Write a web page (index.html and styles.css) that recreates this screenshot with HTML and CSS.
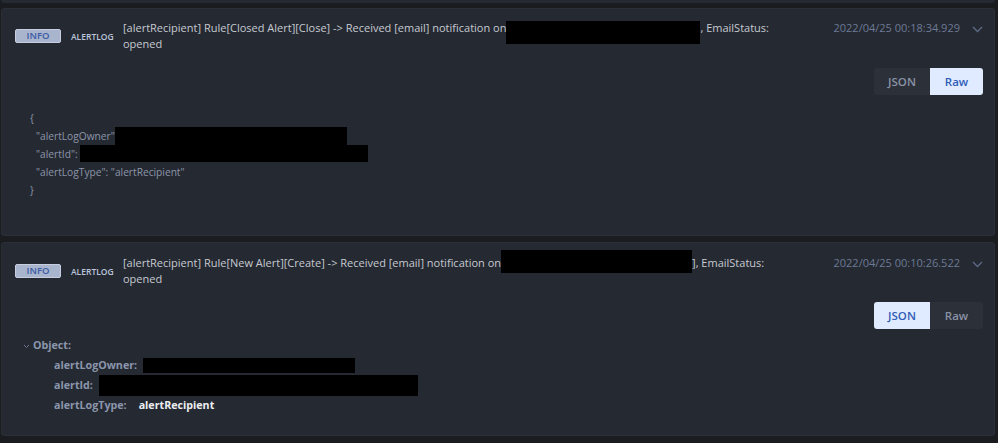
FILE: index.html
```
<!DOCTYPE html>
<html>
<head>
    <title>Alert log</title>
    <meta charset="utf-8" />
    <link rel="stylesheet" href="styles.css">
</head>
<body>
    <div class="log">
        <div class="card-tail"></div>

        <!-- entry shown as raw text -->
        <div class="card">
            <div class="head">
                <span class="badge">INFO</span>
                <span class="source">ALERTLOG</span>
                <div class="message">[alertRecipient] Rule[Closed Alert][Close] -&gt; Received [email] notification on<span class="redact r1"></span>, EmailStatus: opened</div>
                <span class="time">2022/04/25 00:18:34.929</span>
                <span class="chevron"><svg width="11" height="7" viewBox="0 0 11 7"><path d="M1 1l4.5 4.5L10 1" fill="none" stroke="currentColor" stroke-width="1.3"/></svg></span>
            </div>
            <div class="tabs">
                <button class="tab">JSON</button><button class="tab on">Raw</button>
            </div>
            <div class="raw">
                <div>{</div>
                <div class="in">"alertLogOwner"<span class="redact r2"></span></div>
                <div class="in">"alertId": <span class="redact r3"></span></div>
                <div class="in">"alertLogType": "alertRecipient"</div>
                <div>}</div>
            </div>
        </div>

        <!-- entry shown as json tree -->
        <div class="card second">
            <div class="head">
                <span class="badge">INFO</span>
                <span class="source">ALERTLOG</span>
                <div class="message">[alertRecipient] Rule[New Alert][Create] -&gt; Received [email] notification on<span class="redact r4"></span>], EmailStatus: opened</div>
                <span class="time">2022/04/25 00:10:26.522</span>
                <span class="chevron"><svg width="11" height="7" viewBox="0 0 11 7"><path d="M1 1l4.5 4.5L10 1" fill="none" stroke="currentColor" stroke-width="1.3"/></svg></span>
            </div>
            <div class="tabs">
                <button class="tab on">JSON</button><button class="tab">Raw</button>
            </div>
            <div class="tree">
                <div class="node"><svg class="caret" width="7" height="5" viewBox="0 0 7 5"><path d="M1 1l2.5 2.5L6 1" fill="none" stroke="currentColor" stroke-width="1"/></svg>Object:</div>
                <div class="row"><span class="key">alertLogOwner:</span><span class="redact r5"></span></div>
                <div class="row"><span class="key">alertId:</span><span class="redact r6"></span></div>
                <div class="row"><span class="key">alertLogType:</span><span class="val">alertRecipient</span></div>
            </div>
        </div>
    </div>
</body>
</html>
```
FILE: styles.css
```
body {
    margin: 0;
    background-color: #1a1c20;
    font-family: "Open Sans", "Noto Sans", sans-serif;
    color: #c6cad2;
}
.log {
    padding: 0 3px 0 1px;
}
.card-tail {
    height: 3px;
    background-color: #252931;
    border-radius: 0 0 3px 3px;
    margin-bottom: 5px;
}
.card {
    background-color: #252931;
    border: 1px solid #2b3038;
    border-radius: 3px;
    margin-bottom: 6px;
    padding: 11px 11px 36px 0;
}
.card.second {
    padding-top: 12px;
    padding-bottom: 20px;
}
.head {
    display: flex;
    align-items: center;
}
.badge {
    width: 44px;
    height: 12px;
    margin-left: 13px;
    background-color: #a9b4cd;
    border: 1px solid #c6cee0;
    border-radius: 2px;
    color: #3a5ca6;
    font-size: 9.5px;
    font-weight: 600;
    line-height: 12px;
    text-align: center;
}
.source {
    margin-left: 10px;
    width: 44px;
    color: #bcc6dc;
    font-size: 8.5px;
    font-weight: 600;
}
.message {
    flex: 1;
    margin-left: 8px;
    padding-right: 42px;
    font-size: 11px;
    line-height: 16px;
}
.time {
    align-self: flex-start;
    color: #6d7a96;
    font-size: 11px;
    line-height: 16px;
}
.chevron {
    align-self: flex-start;
    margin: -1px 0 0 12px;
    color: #5d6b86;
    line-height: 16px;
}
.redact {
    display: inline-block;
    background-color: #000;
    vertical-align: top;
}
.r1 {
    width: 194px;
    height: 23px;
    margin: 1px 0 -8px;
}
.r4 {
    width: 191px;
    height: 23px;
    margin: -5px 0 -2px;
}
.tabs {
    display: flex;
    justify-content: flex-end;
    margin-top: 16px;
}
.second .tabs {
    margin-top: 15px;
}
.tab {
    width: 56px;
    height: 27px;
    border: none;
    background-color: #2c3039;
    color: #8a93a7;
    font-family: "Open Sans", sans-serif;
    font-size: 11.5px;
    font-weight: 600;
    padding: 0;
}
.tab:first-child {
    border-radius: 3px 0 0 3px;
}
.tab:last-child {
    width: 53px;
    border-radius: 0 3px 3px 0;
}
.tab.on {
    background-color: #e1ebff;
    color: #2f5cb8;
}
.raw {
    margin: 14px 0 0 28px;
    font-size: 10.2px;
    line-height: 18px;
    color: #8c96aa;
}
.raw .in {
    padding-left: 6px;
}
.r2 {
    width: 232px;
    height: 18px;
}
.r3 {
    width: 288px;
    height: 17px;
}
.tree {
    margin: 6px 0 0 21px;
    font-size: 10.7px;
    font-weight: 700;
    color: #8b96ad;
}
.node {
    line-height: 20px;
}
.caret {
    color: #6b7792;
    margin-right: 3px;
    vertical-align: middle;
}
.row {
    display: flex;
    align-items: center;
    height: 20px;
    padding-left: 31px;
}
.key {
    margin-right: 6px;
}
.r5 {
    width: 212px;
    height: 15px;
}
.r6 {
    width: 319px;
    height: 21px;
}
.val {
    margin-left: 6px;
    color: #eceef2;
}
```
